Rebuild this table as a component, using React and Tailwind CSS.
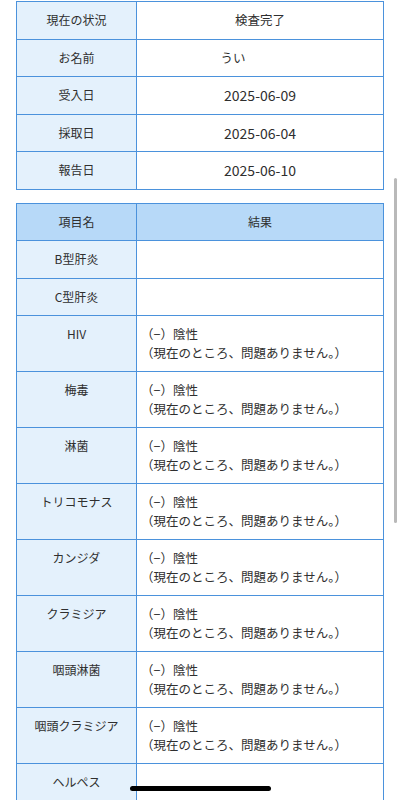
import React from "react";

const info = [
  ["現在の状況", "検査完了"],
  ["お名前", "うい"],
  ["受入日", "2025-06-09"],
  ["採取日", "2025-06-04"],
  ["報告日", "2025-06-10"],
];

const neg = ["（−）陰性", "（現在のところ、問題ありません。）"];

const results = [
  ["B型肝炎", null],
  ["C型肝炎", null],
  ["HIV", neg],
  ["梅毒", neg],
  ["淋菌", neg],
  ["トリコモナス", neg],
  ["カンジダ", neg],
  ["クラミジア", neg],
  ["咽頭淋菌", neg],
  ["咽頭クラミジア", neg],
  ["ヘルペス", null],
];

const isDate = (v) => /^\d/.test(v);

export default function App() {
  return (
    <div
      className="relative w-[400px] h-[800px] overflow-hidden bg-white text-[12px] leading-[18.5px] text-[#2f2f2f]"
      style={{ fontFamily: '"Noto Sans CJK JP", "Noto Sans", sans-serif' }}
    >
      <div className="px-4 pt-[1px] flex flex-col gap-[13px]">
        <div className="border border-[#4b92dc]">
          {info.map(([k, v], i) => (
            <div
              key={k}
              className={`grid grid-cols-[120px_1fr] ${i < info.length - 1 ? "border-b border-[#4b92dc]" : ""}`}
            >
              <div className="bg-[#e4f1fc] border-r border-[#4b92dc] py-[9px] text-center">{k}</div>
              <div
                className={`py-[9px] text-center ${isDate(v) ? "text-[14px]" : "text-[12.5px]"} ${k === "お名前" ? "pr-[54px]" : ""}`}
              >
                {v}
              </div>
            </div>
          ))}
        </div>
        <div className="border border-[#4b92dc]">
          <div className="grid grid-cols-[120px_1fr] border-b border-[#4b92dc] bg-[#b7d9f8]">
            <div className="border-r border-[#4b92dc] py-[9px] text-center">項目名</div>
            <div className="py-[9px] text-center">結果</div>
          </div>
          {results.map(([k, v], i) => (
            <div
              key={k}
              className={`grid grid-cols-[120px_1fr] ${i < results.length - 1 ? "border-b border-[#4b92dc]" : ""}`}
            >
              <div className="bg-[#e4f1fc] border-r border-[#4b92dc] py-[9px] text-center">{k}</div>
              <div className="py-[9px] pl-[4px] text-[12.5px] min-h-[36.5px]">
                {v ? (
                  <>
                    <div>{v[0]}</div>
                    <div>{v[1]}</div>
                  </>
                ) : null}
              </div>
            </div>
          ))}
        </div>
      </div>
      <div className="absolute left-[394px] top-[178px] w-[3px] h-[345px] rounded-full bg-[#b9b9b9]" />
      <div className="absolute left-[130px] top-[786px] w-[141px] h-[5px] rounded-full bg-black" />
    </div>
  );
}
